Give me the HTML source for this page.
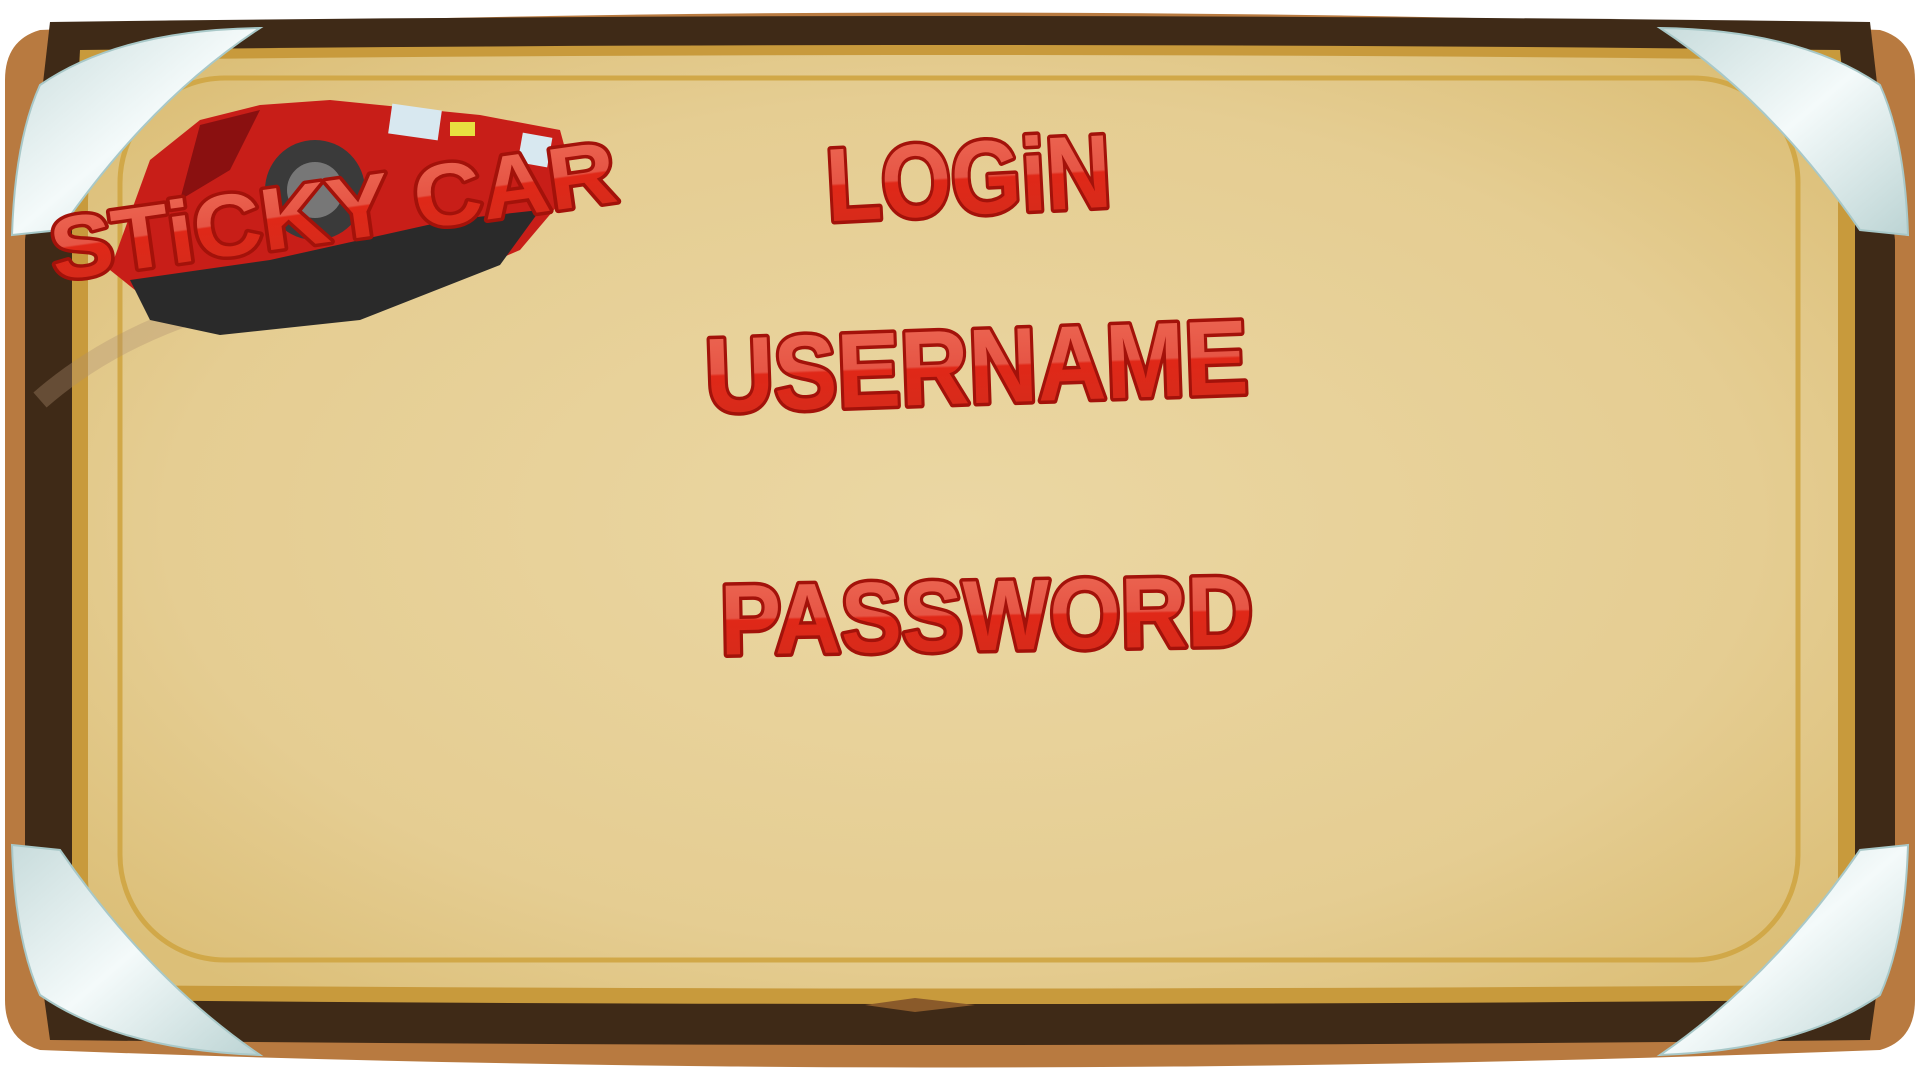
<!DOCTYPE html>
<html><head><meta charset="utf-8"><style>html,body{margin:0;padding:0;background:#fff;width:1920px;height:1080px;overflow:hidden}svg{display:block}</style></head>
<body>
<svg width="1920" height="1080" viewBox="0 0 1920 1080" xmlns="http://www.w3.org/2000/svg">
<defs>
<radialGradient id="parch" cx="50%" cy="50%" r="65%">
<stop offset="0" stop-color="#ebd7a3"/><stop offset="0.7" stop-color="#e5cd92"/><stop offset="1" stop-color="#dcbf78"/>
</radialGradient>
<linearGradient id="red" x1="0" y1="0" x2="0" y2="1">
<stop offset="0" stop-color="#ee6a55"/><stop offset="0.48" stop-color="#e65545"/><stop offset="0.5" stop-color="#e02818"/><stop offset="1" stop-color="#d22c1c"/>
</linearGradient>
<linearGradient id="glass" x1="0" y1="0" x2="1" y2="1">
<stop offset="0" stop-color="#c8dcdc"/><stop offset="0.5" stop-color="#f4fafa"/><stop offset="1" stop-color="#bcd4d4"/>
</linearGradient>
</defs>
<path d="M40 30 Q960 -5 1880 30 Q1915 40 1915 80 L1915 1000 Q1915 1040 1880 1050 Q960 1085 40 1050 Q5 1040 5 1000 L5 80 Q5 40 40 30Z" fill="#b87a40"/>
<path d="M50 22 Q960 10 1870 22 L1895 240 L1895 860 L1870 1040 Q960 1050 50 1040 L25 860 L25 240Z" fill="#3f2a17"/>
<path d="M80 50 Q960 40 1840 50 L1855 200 L1855 880 L1840 1000 Q960 1008 80 1000 L72 880 L72 200Z" fill="#c89a3c"/>
<path d="M95 60 Q960 50 1825 60 L1838 200 L1838 880 L1825 985 Q960 992 95 985 L88 880 L88 200Z" fill="url(#parch)"/>
<rect x="120" y="78" width="1678" height="882" rx="105" fill="none" stroke="#d1a848" stroke-width="5"/>
<path d="M865 1005 L915 998 L975 1005 L915 1012Z" fill="#8a5a2a"/>
<g fill="url(#glass)" stroke="#a8c8c8" stroke-width="2">
<path d="M260 28 Q120 30 40 85 Q15 140 12 235 L60 230 Q150 100 260 28Z"/>
<path d="M1660 28 Q1800 30 1880 85 Q1905 140 1908 235 L1860 230 Q1770 100 1660 28Z"/>
<path d="M260 1055 Q120 1050 40 995 Q15 940 12 845 L60 850 Q150 980 260 1055Z"/>
<path d="M1660 1055 Q1800 1050 1880 995 Q1905 940 1908 845 L1860 850 Q1770 980 1660 1055Z"/>
</g>
<g>
<path d="M40 400 Q120 330 240 300" stroke="#b09070" stroke-width="20" fill="none" opacity="0.35"/>
<path d="M110 270 L150 160 L200 120 L260 105 L330 100 L480 115 L560 130 L575 185 L520 250 L380 310 L260 330 L160 310Z" fill="#c81e18"/>
<path d="M130 280 L270 260 L450 220 L540 210 L500 265 L360 320 L220 335 L150 320Z" fill="#2a2a2a"/>
<circle cx="315" cy="190" r="50" fill="#3a3a3a"/><circle cx="315" cy="190" r="28" fill="#777"/>
<rect x="390" y="107" width="50" height="30" fill="#d8e8f0" transform="rotate(8 415 122)"/>
<rect x="520" y="135" width="30" height="30" fill="#d8e8f0" transform="rotate(10 535 150)"/>
<rect x="450" y="122" width="25" height="14" fill="#e8e040"/>
<path d="M200 125 L260 110 L230 170 L180 200Z" fill="#8a1010"/>
</g>
<g font-family="Liberation Sans, sans-serif" font-weight="bold" fill="url(#red)" stroke="#a3120a" stroke-width="7" paint-order="stroke" stroke-linejoin="round">
<text x="48" y="240" font-size="88" textLength="570" lengthAdjust="spacingAndGlyphs" transform="rotate(-8 340 210)">STiCKY CAR</text>
<text x="826" y="214" font-size="104" textLength="285" lengthAdjust="spacingAndGlyphs" transform="rotate(-3 968 178)">LOGiN</text>
<text x="705" y="403" font-size="106" textLength="543" lengthAdjust="spacingAndGlyphs" transform="rotate(-2 975 365)">USERNAME</text>
<text x="720" y="650" font-size="100" textLength="533" lengthAdjust="spacingAndGlyphs" transform="rotate(-1 985 612)">PASSWORD</text>
</g>
</svg>
</body></html>
